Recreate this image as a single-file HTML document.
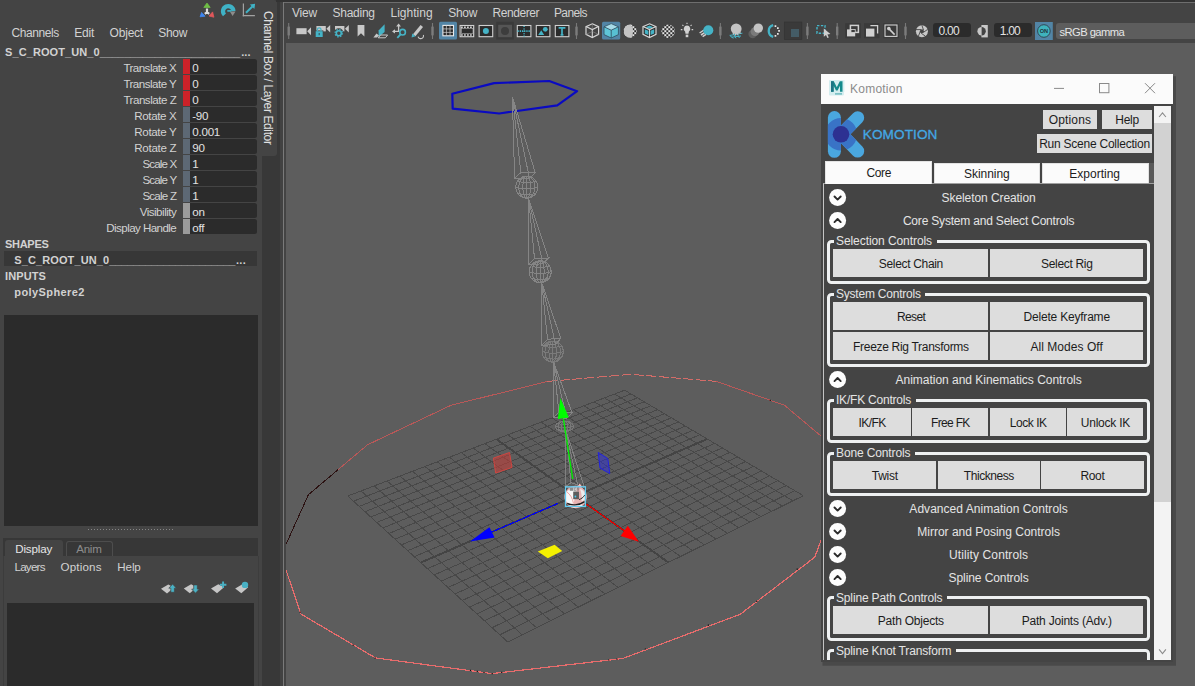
<!DOCTYPE html>
<html lang="en"><head><meta charset="utf-8"><title>Maya - Komotion</title>
<style>
html,body{margin:0;padding:0;}
body{width:1195px;height:686px;overflow:hidden;background:#444444;position:relative;
 font-family:"Liberation Sans",sans-serif;color:#cfcfcf;}
.b{position:absolute;box-sizing:border-box;}
.t{position:absolute;white-space:pre;display:block;margin:0;padding:0;}
svg{position:absolute;overflow:visible;}
button{font-family:"Liberation Sans",sans-serif;margin:0;padding:0;border:0;}

#kwin{position:absolute;left:821px;top:74px;width:352px;height:587.7px;background:#444444;box-shadow:2.25px 3px 0 0.75px #494949;}
#kwin .title{position:absolute;left:0;top:0;width:352px;height:30px;background:#fbfbfb;}
.kbtn{position:absolute;box-sizing:border-box;background:#dddddd;color:#1c1c1c;font-size:12px;line-height:12px;text-align:center;white-space:pre;}
.ktab{position:absolute;box-sizing:border-box;background:#f8f8f8;color:#1c1c1c;}
.grp{position:absolute;box-sizing:border-box;border:3px solid #eef0f1;border-radius:4.5px;}
</style></head>
<body>
<div class="b" id="channelbox" style="left:0;top:0;width:262px;height:686px;background:#444444;">
<svg style="left:199px;top:2px" width="58" height="17" viewBox="199 2 58 17">
 <g><polygon points="207,3.1 210.2,7.4 203.8,7.4" fill="#6fbf45" stroke="#6fbf45" stroke-width="0.8" stroke-linejoin="round"/><polygon points="201.6,12.4 200.1,16.8 205,16.2" fill="#3f86f0" stroke="#3f86f0" stroke-width="0.8" stroke-linejoin="round"/><polygon points="212.6,11.9 209,16 213.9,17.2" fill="#e0575a" stroke="#e0575a" stroke-width="0.8" stroke-linejoin="round"/>
 <path d="M207 8.6V12.2M207 12.2L204.8 13.8M207 12.2L209.2 13.8" stroke="#dcdcdc" stroke-width="2.2" fill="none"/></g>
 <g><path d="M224.5 14.9A5.2 5.2 0 1 1 233.4 11.1" stroke="#3fb2c6" stroke-width="4.2" fill="none"/><polygon points="229.8,11.6 235.5,11.6 232.6,16.1" fill="#8c8c8c"/><path d="M227.3 10.9H231.2" stroke="#3fb2c6" stroke-width="1.7"/></g>
 <g><path d="M243.4 3.5V16.4M242.6 15.6H254.9" stroke="#a2a2a2" stroke-width="1.2" fill="none"/><path d="M246 12.8L252.4 6.5" stroke="#3fb2c6" stroke-width="1.9"/><polygon points="255.1,3.8 254.4,9 249.9,4.5" fill="#3fb2c6"/></g>
</svg>
<span class="t" style="top:26.84px;font-size:12px;line-height:12px;left:11.6px;letter-spacing:-0.438px;color:#d2d2d2;">Channels</span>
<span class="t" style="top:26.84px;font-size:12px;line-height:12px;left:74.3px;letter-spacing:-0.245px;color:#d2d2d2;">Edit</span>
<span class="t" style="top:26.84px;font-size:12px;line-height:12px;left:109.6px;letter-spacing:-0.214px;color:#d2d2d2;">Object</span>
<span class="t" style="top:26.84px;font-size:12px;line-height:12px;left:158.3px;letter-spacing:-0.330px;color:#d2d2d2;">Show</span>
<span class="t" style="top:46.59px;font-size:11px;line-height:11px;left:5px;letter-spacing:0.097px;color:#d2d2d2;font-weight:bold;">S_C_ROOT_UN_0</span>
<span class="t" style="top:46.59px;font-size:11px;line-height:11px;left:99.8px;letter-spacing:-0.014px;color:#d2d2d2;font-weight:bold;">_______________________</span>
<span class="t" style="top:46.59px;font-size:11px;line-height:11px;left:241.2px;letter-spacing:0.111px;color:#d2d2d2;font-weight:bold;">...</span>
<div class="b" style="left:183px;top:59px;width:7px;height:14.6px;background:#cc2229;"></div>
<div class="b" style="left:190px;top:59px;width:67px;height:14.6px;background:#2b2b2b;border-radius:0 2.5px 2.5px 0;"></div>
<span class="t" style="top:61.98px;font-size:11.6px;line-height:11.6px;left:123.4px;letter-spacing:-0.544px;color:#d2d2d2;">Translate X</span>
<span class="t" style="top:61.98px;font-size:11.6px;line-height:11.6px;left:192.2px;color:#e2e2e2;">0</span>
<div class="b" style="left:183px;top:75px;width:7px;height:14.6px;background:#cc2229;"></div>
<div class="b" style="left:190px;top:75px;width:67px;height:14.6px;background:#2b2b2b;border-radius:0 2.5px 2.5px 0;"></div>
<span class="t" style="top:77.98px;font-size:11.6px;line-height:11.6px;left:123.4px;letter-spacing:-0.525px;color:#d2d2d2;">Translate Y</span>
<span class="t" style="top:77.98px;font-size:11.6px;line-height:11.6px;left:192.2px;color:#e2e2e2;">0</span>
<div class="b" style="left:183px;top:91px;width:7px;height:14.6px;background:#cc2229;"></div>
<div class="b" style="left:190px;top:91px;width:67px;height:14.6px;background:#2b2b2b;border-radius:0 2.5px 2.5px 0;"></div>
<span class="t" style="top:93.98px;font-size:11.6px;line-height:11.6px;left:123.4px;letter-spacing:-0.485px;color:#d2d2d2;">Translate Z</span>
<span class="t" style="top:93.98px;font-size:11.6px;line-height:11.6px;left:192.2px;color:#e2e2e2;">0</span>
<div class="b" style="left:183px;top:107px;width:7px;height:14.6px;background:#5d6874;"></div>
<div class="b" style="left:190px;top:107px;width:67px;height:14.6px;background:#2b2b2b;border-radius:0 2.5px 2.5px 0;"></div>
<span class="t" style="top:109.98px;font-size:11.6px;line-height:11.6px;left:134.3px;letter-spacing:-0.392px;color:#d2d2d2;">Rotate X</span>
<span class="t" style="top:109.98px;font-size:11.6px;line-height:11.6px;left:192.2px;letter-spacing:-0.212px;color:#e2e2e2;">-90</span>
<div class="b" style="left:183px;top:123px;width:7px;height:14.6px;background:#5d6874;"></div>
<div class="b" style="left:190px;top:123px;width:67px;height:14.6px;background:#2b2b2b;border-radius:0 2.5px 2.5px 0;"></div>
<span class="t" style="top:125.98px;font-size:11.6px;line-height:11.6px;left:134.3px;letter-spacing:-0.366px;color:#d2d2d2;">Rotate Y</span>
<span class="t" style="top:125.98px;font-size:11.6px;line-height:11.6px;left:192.2px;letter-spacing:-0.220px;color:#e2e2e2;">0.001</span>
<div class="b" style="left:183px;top:139px;width:7px;height:14.6px;background:#5d6874;"></div>
<div class="b" style="left:190px;top:139px;width:67px;height:14.6px;background:#2b2b2b;border-radius:0 2.5px 2.5px 0;"></div>
<span class="t" style="top:141.98px;font-size:11.6px;line-height:11.6px;left:134.3px;letter-spacing:-0.311px;color:#d2d2d2;">Rotate Z</span>
<span class="t" style="top:141.98px;font-size:11.6px;line-height:11.6px;left:192.2px;letter-spacing:-0.245px;color:#e2e2e2;">90</span>
<div class="b" style="left:183px;top:155px;width:7px;height:14.6px;background:#5d6874;"></div>
<div class="b" style="left:190px;top:155px;width:67px;height:14.6px;background:#2b2b2b;border-radius:0 2.5px 2.5px 0;"></div>
<span class="t" style="top:157.98px;font-size:11.6px;line-height:11.6px;left:142.4px;letter-spacing:-0.868px;color:#d2d2d2;">Scale X</span>
<span class="t" style="top:157.98px;font-size:11.6px;line-height:11.6px;left:192.2px;color:#e2e2e2;">1</span>
<div class="b" style="left:183px;top:171px;width:7px;height:14.6px;background:#5d6874;"></div>
<div class="b" style="left:190px;top:171px;width:67px;height:14.6px;background:#2b2b2b;border-radius:0 2.5px 2.5px 0;"></div>
<span class="t" style="top:173.98px;font-size:11.6px;line-height:11.6px;left:142.4px;letter-spacing:-0.838px;color:#d2d2d2;">Scale Y</span>
<span class="t" style="top:173.98px;font-size:11.6px;line-height:11.6px;left:192.2px;color:#e2e2e2;">1</span>
<div class="b" style="left:183px;top:187px;width:7px;height:14.6px;background:#5d6874;"></div>
<div class="b" style="left:190px;top:187px;width:67px;height:14.6px;background:#2b2b2b;border-radius:0 2.5px 2.5px 0;"></div>
<span class="t" style="top:189.98px;font-size:11.6px;line-height:11.6px;left:142.4px;letter-spacing:-0.775px;color:#d2d2d2;">Scale Z</span>
<span class="t" style="top:189.98px;font-size:11.6px;line-height:11.6px;left:192.2px;color:#e2e2e2;">1</span>
<div class="b" style="left:183px;top:203px;width:7px;height:14.6px;background:#9b9b9b;"></div>
<div class="b" style="left:190px;top:203px;width:67px;height:14.6px;background:#2b2b2b;border-radius:0 2.5px 2.5px 0;"></div>
<span class="t" style="top:205.98px;font-size:11.6px;line-height:11.6px;left:139.7px;letter-spacing:-0.509px;color:#d2d2d2;">Visibility</span>
<span class="t" style="top:205.98px;font-size:11.6px;line-height:11.6px;left:192.2px;letter-spacing:-0.245px;color:#e2e2e2;">on</span>
<div class="b" style="left:183px;top:219px;width:7px;height:14.6px;background:#9b9b9b;"></div>
<div class="b" style="left:190px;top:219px;width:67px;height:14.6px;background:#2b2b2b;border-radius:0 2.5px 2.5px 0;"></div>
<span class="t" style="top:221.98px;font-size:11.6px;line-height:11.6px;left:106.3px;letter-spacing:-0.573px;color:#d2d2d2;">Display Handle</span>
<span class="t" style="top:221.98px;font-size:11.6px;line-height:11.6px;left:192.2px;letter-spacing:-0.160px;color:#e2e2e2;">off</span>
<span class="t" style="top:239.49px;font-size:11px;line-height:11px;left:5px;letter-spacing:-0.290px;color:#d2d2d2;font-weight:bold;">SHAPES</span>
<div class="b" style="left:4px;top:251px;width:253px;height:14.6px;background:#373737;"></div>
<span class="t" style="top:254.99px;font-size:11px;line-height:11px;left:14.3px;letter-spacing:0.105px;color:#d2d2d2;font-weight:bold;">S_C_ROOT_UN_0</span>
<span class="t" style="top:254.99px;font-size:11px;line-height:11px;left:109.2px;letter-spacing:-0.118px;color:#d2d2d2;font-weight:bold;">_____________________</span>
<span class="t" style="top:254.99px;font-size:11px;line-height:11px;left:236px;letter-spacing:0.277px;color:#d2d2d2;font-weight:bold;">...</span>
<span class="t" style="top:271.49px;font-size:11px;line-height:11px;left:5px;letter-spacing:0.110px;color:#d2d2d2;font-weight:bold;">INPUTS</span>
<span class="t" style="top:286.69px;font-size:11px;line-height:11px;left:14.3px;letter-spacing:0.407px;color:#d2d2d2;font-weight:bold;">polySphere2</span>
<div class="b" style="left:4px;top:315px;width:254px;height:210.6px;background:#2b2b2b;"></div>
<div class="b" style="left:88px;top:529px;width:85.5px;height:1px;background-image:linear-gradient(90deg,#858585 1px,rgba(0,0,0,0) 1px);background-size:3px 1px;"></div>
<div class="b" style="left:3px;top:538px;width:255.4px;height:18px;background:#373737;"></div>
<div class="b" style="left:5px;top:540px;width:58px;height:16.5px;background:#444444;border-radius:3px 3px 0 0;"></div>
<div class="b" style="left:65.5px;top:540.5px;width:47.1px;height:15.5px;background:#373737;border:1px solid #4d4d4d;border-bottom:0;border-radius:3px 3px 0 0;"></div>
<span class="t" style="top:543.48px;font-size:11.6px;line-height:11.6px;left:15.2px;letter-spacing:-0.148px;color:#e6e6e6;">Display</span>
<span class="t" style="top:543.48px;font-size:11.6px;line-height:11.6px;left:76.2px;letter-spacing:-0.257px;color:#8c8c8c;">Anim</span>
<span class="t" style="top:561.38px;font-size:11.6px;line-height:11.6px;left:14.5px;letter-spacing:-0.770px;color:#d2d2d2;">Layers</span>
<span class="t" style="top:561.38px;font-size:11.6px;line-height:11.6px;left:60.5px;letter-spacing:0.175px;color:#d2d2d2;">Options</span>
<span class="t" style="top:561.38px;font-size:11.6px;line-height:11.6px;left:117.3px;letter-spacing:-0.114px;color:#d2d2d2;">Help</span>
<svg style="left:158px;top:580px" width="96" height="16" viewBox="158 580 96 16">
 <polygon points="161,588.8 168.3,584.4 174,587.4 167,593.4" fill="#c6c6c6"/><path d="M172.6 584.1L176.4 588.2H174.4V592.3H170.8V588.2H168.8Z" fill="#49b1c4" stroke="#444" stroke-width="0.7"/>
 <polygon points="183.8,588.6 191.1,584.2 196.8,587.2 189.8,593.2" fill="#c6c6c6"/><path d="M195.5 593.2L191.7 589.1H193.7V584.9H197.3V589.1H199.3Z" fill="#49b1c4" stroke="#444" stroke-width="0.7"/>
 <polygon points="211,588.6 218.3,584.2 224,587.2 217,593.3" fill="#c6c6c6"/><path d="M223.1 581.6V588M219.9 584.8H226.4" stroke="#49b1c4" stroke-width="1.9"/>
 <polygon points="235.2,588.6 242.4,584.2 248.2,587.2 241.3,593.3" fill="#c6c6c6"/><circle cx="245" cy="584.9" r="3.2" fill="#49b1c4"/>
</svg>
<div class="b" style="left:7px;top:603px;width:247px;height:83px;background:#2b2b2b;"></div>
</div>
<div class="b" style="left:258.3px;top:556px;width:1px;height:130px;background:#3d3d3d;"></div>
<div class="b" style="left:3.3px;top:556px;width:0.9px;height:130px;background:#3c3c3c;"></div>
<div class="b" style="left:262px;top:0px;width:18px;height:686px;background:#383838;"></div>
<div class="b" style="left:262px;top:0px;width:15.3px;height:155.5px;background:#444444;border-radius:0 3px 3px 0;"></div>
<span class="t" style="left:264.1px;top:11.3px;font-size:12px;line-height:12px;letter-spacing:-0.381px;color:#e0e0e0;transform-origin:0 0;transform:translate(10.2px,0) rotate(90deg);">Channel Box / Layer Editor</span>
<div class="b" style="left:279.8px;top:0px;width:3.2px;height:686px;background:#424242;"></div>
<div class="b" id="viewport-panel" style="left:283px;top:0;width:912px;height:686px;background:#444444;">
</div>
<div class="b" style="left:276px;top:0px;width:919px;height:2px;background:#333333;"></div>
<div class="b" style="left:283px;top:2px;width:912px;height:1px;background:#6e6e6e;"></div>
<div class="b" style="left:282.7px;top:2px;width:1.4px;height:684px;background:#7a7a7a;"></div>
<span class="t" style="top:7.04px;font-size:12px;line-height:12px;left:292px;letter-spacing:-0.224px;color:#d2d2d2;">View</span>
<span class="t" style="top:7.04px;font-size:12px;line-height:12px;left:332.6px;letter-spacing:-0.277px;color:#d2d2d2;">Shading</span>
<span class="t" style="top:7.04px;font-size:12px;line-height:12px;left:390.5px;letter-spacing:0.008px;color:#d2d2d2;">Lighting</span>
<span class="t" style="top:7.04px;font-size:12px;line-height:12px;left:448.2px;letter-spacing:-0.255px;color:#d2d2d2;">Show</span>
<span class="t" style="top:7.04px;font-size:12px;line-height:12px;left:492.5px;letter-spacing:-0.441px;color:#d2d2d2;">Renderer</span>
<span class="t" style="top:7.04px;font-size:12px;line-height:12px;left:554px;letter-spacing:-0.649px;color:#d2d2d2;">Panels</span>
<svg id="vp-toolbar" style="left:283px;top:19px" width="912" height="24" viewBox="283 19 912 24">
<path d="M288.7 23V39" stroke="#787878" stroke-width="1.1"/><path d="M288.7 26.6V35.4" stroke="#7c7c7c" stroke-width="2.4"/>
<path d="M432.5 23V39" stroke="#787878" stroke-width="1.1"/><path d="M432.5 26.6V35.4" stroke="#7c7c7c" stroke-width="2.4"/>
<path d="M576.5 23V39" stroke="#787878" stroke-width="1.1"/><path d="M576.5 26.6V35.4" stroke="#7c7c7c" stroke-width="2.4"/>
<path d="M720.4 23V39" stroke="#787878" stroke-width="1.1"/><path d="M720.4 26.6V35.4" stroke="#7c7c7c" stroke-width="2.4"/>
<path d="M807.4 23V39" stroke="#787878" stroke-width="1.1"/><path d="M807.4 26.6V35.4" stroke="#7c7c7c" stroke-width="2.4"/>
<path d="M837.2 23V39" stroke="#787878" stroke-width="1.1"/><path d="M837.2 26.6V35.4" stroke="#7c7c7c" stroke-width="2.4"/>
<path d="M905.5 23V39" stroke="#787878" stroke-width="1.1"/><path d="M905.5 26.6V35.4" stroke="#7c7c7c" stroke-width="2.4"/>
<rect x="296.4" y="28.2" width="10.2" height="6" fill="#c8c8c8"/><polygon points="307.2,31.2 311,27.2 311,35.2" fill="#c8c8c8"/>
<rect x="316.4" y="26" width="9.4" height="5.4" fill="#c8c8c8"/><polygon points="326.4,28.7 330.2,25 330.2,32.4" fill="#c8c8c8"/>
<rect x="315" y="30.4" width="8.4" height="7.4" fill="#444"/><rect x="315.7" y="31.2" width="7" height="5.8" fill="#45b3c6"/><path d="M317.4 31.2V29.6A1.8 1.8 0 0 1 321 29.6V31.2" stroke="#45b3c6" stroke-width="1.3" fill="none"/><rect x="318.6" y="33" width="1.2" height="2.2" fill="#2f5c66"/>
<rect x="335" y="26" width="9.4" height="5.4" fill="#c8c8c8"/><polygon points="345,28.7 348.8,25 348.8,32.4" fill="#c8c8c8"/>
<circle cx="338.8" cy="33.2" r="4.9" fill="#444"/><circle cx="338.8" cy="33.2" r="2.5" fill="none" stroke="#45b3c6" stroke-width="1.6"/><circle cx="338.8" cy="33.2" r="3.7" fill="none" stroke="#45b3c6" stroke-width="1.3" stroke-dasharray="1.45 1.456"/>
<polygon points="357.6,24.9 364.4,24.9 364.4,36.4 361,33.2 357.6,36.4" fill="#c8c8c8"/>
<polygon points="378.6,30.5 384.6,24.2 384.6,32 378.6,37" fill="#45b3c6"/><polygon points="376.5,33.5 373.4,37.6 377,37.6 379,35.5" fill="#c8c8c8"/><polygon points="380.5,35 387.6,35 385.4,37.8 378.2,37.8" fill="none" stroke="#c8c8c8" stroke-width="1"/>
<path d="M398.6 25.2V31.4H393.4" stroke="#c8c8c8" stroke-width="1.3" fill="none"/><polygon points="398.6,23.4 401,26.6 396.2,26.6" fill="#c8c8c8"/><polygon points="392,31.4 395,29.2 395,33.6" fill="#c8c8c8"/>
<circle cx="402.6" cy="32.2" r="2.8" fill="none" stroke="#45b3c6" stroke-width="1.6"/><path d="M400.6 34.4L397.3 37.8" stroke="#45b3c6" stroke-width="1.8"/>
<path d="M414.2 35.2L421.8 26" stroke="#c8c8c8" stroke-width="3.2"/><polygon points="411.6,37.6 412.2,33.6 415.6,36.2" fill="#45b3c6"/><path d="M418 36.6A2.6 2.6 0 0 0 423.4 35" stroke="#c8c8c8" stroke-width="1.1" fill="none"/>
<rect x="439" y="21.8" width="18" height="17.8" rx="1.5" fill="#5285a6"/>
<rect x="442.9" y="25.4" width="10.6" height="10.4" fill="#2b2b2b" stroke="#ececec" stroke-width="1.1"/><path d="M446.4 25.4V35.8M450 25.4V35.8M442.9 28.9H453.5M442.9 32.4H453.5" stroke="#d0d0d0" stroke-width="0.7"/>
<rect x="460.1" y="25.5" width="13.6" height="11.2" fill="#2b2b2b" stroke="#cfcfcf" stroke-width="1.1"/><path d="M461 27.3H473.5M461 35H473.5" stroke="#cfcfcf" stroke-width="1.6" stroke-dasharray="1.8 1.2"/><rect x="461.4" y="28.6" width="11.6" height="5" fill="#2b2b2b" stroke="#cfcfcf" stroke-width="0.5"/>
<rect x="479.1" y="25.5" width="13.6" height="11.2" fill="#2b2b2b" stroke="#cfcfcf" stroke-width="1.1"/><circle cx="485.9" cy="31.1" r="3" fill="#45b3c6"/>
<rect x="496.3" y="21.8" width="17.5" height="17.8" fill="#3a3a3a"/><rect x="498.2" y="24.8" width="13.8" height="12.4" fill="#555555"/><circle cx="505" cy="31" r="4" fill="#3d3d3d"/>
<rect x="517.3" y="25.5" width="13.6" height="11.2" fill="#2b2b2b" stroke="#cfcfcf" stroke-width="1.1"/><path d="M517.5 31.1H530.8" stroke="#45b3c6" stroke-width="1.8" stroke-dasharray="1.3 0.9"/><path d="M524.1 26H524.1M524.1 26V36.4" stroke="#45b3c6" stroke-width="1.6" stroke-dasharray="1 1.4"/>
<rect x="536.3" y="25.5" width="13.6" height="11.2" fill="#2b2b2b" stroke="#cfcfcf" stroke-width="1.1"/><circle cx="545.3" cy="29.3" r="2.4" fill="#45b3c6"/><polygon points="538.2,35 541.2,30.2 544.2,35" fill="#45b3c6"/>
<rect x="555.3" y="25.5" width="13.6" height="11.2" fill="#2b2b2b" stroke="#cfcfcf" stroke-width="1.1"/><path d="M558.6 27.8H565.4M562 27.8V34.8M560.6 34.9H563.4" stroke="#45b3c6" stroke-width="1.7" fill="none"/>
<path d="M592.3 23.8L598.6 26.6V34.4L592.3 37.6L586 34.4V26.6Z" fill="none" stroke="#d6d6d6" stroke-width="1.2"/><path d="M586 26.6L592.3 29.6L598.6 26.6M592.3 29.6V37.6" fill="none" stroke="#d6d6d6" stroke-width="1.1"/><path d="M592.3 23.8V29M586 34.4L592.3 31.5L598.6 34.4" stroke="#8a8a8a" stroke-width="0.6" fill="none"/>
<rect x="602" y="21.8" width="18.2" height="17.8" rx="1.5" fill="#5285a6"/>
<polygon points="611.2,23.6 618.4,26.8 611.2,30.2 604,26.8" fill="#a7dbe8"/><polygon points="604,26.8 611.2,30.2 611.2,38 604,34.6" fill="#5fc6d8"/><polygon points="618.4,26.8 611.2,30.2 611.2,38 618.4,34.6" fill="#58c0d2"/><path d="M611.2 23.6L618.4 26.8V34.6L611.2 38L604 34.6V26.8Z M604 26.8L611.2 30.2L618.4 26.8M611.2 30.2V38" stroke="#2f4c5e" stroke-width="0.8" fill="none"/>
<defs><pattern id="chk" width="4" height="4" patternUnits="userSpaceOnUse" x="0.3" y="0.2"><rect width="4" height="4" fill="#e4e4e4"/><rect width="2" height="2" fill="#2b2b2b"/><rect x="2" y="2" width="2" height="2" fill="#2b2b2b"/></pattern></defs>
<circle cx="630.3" cy="31.2" r="6.6" fill="url(#chk)"/><path d="M630.6 24.6A6.6 6.6 0 0 0 630.6 37.8A10 10 0 0 0 630.6 24.6Z" fill="#c4c4c4"/><circle cx="630.3" cy="31.2" r="6.6" fill="#c4c4c4" clip-path="inset(0 50% 0 0)"/>
<path d="M649.5 23.8L656 26.6V34.4L649.5 37.6L643 34.4V26.6Z" fill="#2b2b2b" stroke="#d6d6d6" stroke-width="1.2"/><polygon points="649.5,25.6 653.4,27.2 649.5,28.8 645.6,27.2" fill="#45b3c6"/><polygon points="644.8,29.2 648.4,30.8 648.4,35 644.8,33.4" fill="#45b3c6"/><polygon points="654.2,29.2 650.6,30.8 650.6,35 654.2,33.4" fill="#45b3c6"/><path d="M643 26.6L649.5 29.6L656 26.6M649.5 29.6V37.6" fill="none" stroke="#d6d6d6" stroke-width="1.1"/>
<circle cx="668.2" cy="31.2" r="6.7" fill="url(#chk)"/>
<path d="M687 25.6A3.3 3.3 0 0 1 688.9 31.6L688.5 33.8H685.5L685.1 31.6A3.3 3.3 0 0 1 687 25.6Z" fill="#d2d2d2"/><rect x="685.7" y="34.6" width="2.6" height="2.6" fill="#d2d2d2"/><path d="M687 22.8V24M682.4 24.8L683.4 25.8M691.6 24.8L690.6 25.8M680.8 29.6H682.4M693.2 29.6H691.6" stroke="#d2d2d2" stroke-width="1.1"/>
<path d="M699.6 33L704 30M701 35L705 32.4M702.6 36.6L706 34.4" stroke="#d2d2d2" stroke-width="1.5"/><circle cx="708.3" cy="30.2" r="5" fill="#45b3c6"/>
<path d="M730 35.4L742.4 33.2M731.6 37.2L741 36M733 33L736 38.4M736.6 32.6L739.4 38M729.6 35.4L733.4 38.4" stroke="#45b3c6" stroke-width="1"/><circle cx="736.2" cy="28.8" r="5.4" fill="#c4c4c4"/><path d="M733.4 32V34.4M735.6 32.8V35.4M737.8 32.8V35M740 31.6V33.8" stroke="#c4c4c4" stroke-width="1.2"/>
<circle cx="752.6" cy="34" r="4.2" fill="#5e5e5e"/><circle cx="755" cy="31.6" r="4.4" fill="#7a7a7a"/><circle cx="758.3" cy="28.1" r="4.7" fill="#c4c4c4"/>
<path d="M773.2 25.2A6 6 0 0 0 773.2 36.8" stroke="#45b3c6" stroke-width="2.3" fill="none"/><path d="M774.6 25.2h1.7v1.7h-1.7zM777 27.2h1.7v1.7h-1.7zM778.2 30.1h1.7v1.7h-1.7zM777 33h1.7v1.7h-1.7zM774.6 35.1h1.7v1.7h-1.7z" fill="#e6e6e6"/>
<rect x="784.3" y="22" width="17.6" height="17.6" fill="#3a3a3a" stroke="#333" stroke-width="0.6"/><rect x="791" y="29" width="8" height="8" fill="#445c66"/>
<rect x="817" y="25.6" width="8" height="7.6" fill="none" stroke="#45b3c6" stroke-width="1.4" stroke-dasharray="2.4 1.5"/><polygon points="823.8,28.6 830.4,34 827.4,34.4 828.8,37.4 827.4,38 826,35 823.8,36.8" fill="#cfcfcf"/>
<rect x="845.2" y="23.2" width="15.6" height="15" fill="#3a3a3a"/>
<rect x="864" y="23.2" width="15.6" height="15" fill="#3a3a3a"/>
<rect x="883.3" y="23.2" width="15.6" height="15" fill="#3a3a3a"/>
<rect x="850.4" y="25.4" width="8" height="7" fill="none" stroke="#d0d0d0" stroke-width="1.5"/><rect x="847" y="29.4" width="8.2" height="7" fill="#d0d0d0"/><rect x="851" y="29.4" width="4.2" height="3" fill="#3a3a3a" stroke="#d0d0d0" stroke-width="0.8"/>
<path d="M870.4 25.6H877.6V33.4" fill="none" stroke="#d0d0d0" stroke-width="1.3"/><rect x="866" y="28.6" width="8.4" height="8" fill="#d0d0d0"/>
<rect x="885" y="25" width="12" height="11.4" fill="#3a3a3a" stroke="#d0d0d0" stroke-width="1.1"/><path d="M888.6 28.4L894.6 34.6" stroke="#d0d0d0" stroke-width="1.6"/><circle cx="888.8" cy="28.6" r="1.8" fill="#d0d0d0"/>
<circle cx="921.9" cy="31.3" r="6" fill="#c8c8c8"/><circle cx="921.9" cy="31.3" r="2" fill="#444"/><path d="M921.9 25.3L923.5 30M927.6 29.4L923.4 32.4M925.4 36.2L921.2 33.2M918.4 36.2L920.2 31.6M916 29.6L921 29.6" stroke="#444" stroke-width="0.9"/>
<rect x="981.4" y="25" width="6.4" height="12.4" fill="#c8c8c8"/><circle cx="981.6" cy="31.2" r="4.2" fill="#c8c8c8"/><path d="M981.6 27A4.2 4.2 0 0 1 981.6 35.4Z" fill="#444"/>
<rect x="1035" y="22" width="17.8" height="18" fill="#5285a6"/><circle cx="1043.9" cy="31" r="6.3" fill="#3fb3bd" stroke="#2d3e48" stroke-width="0.9"/>
<text x="1043.9" y="33.1" text-anchor="middle" font-family="Liberation Sans, sans-serif" font-weight="bold" font-size="5.6" fill="#22343c">ON</text>
</svg>
<div class="b" style="left:933px;top:23.4px;width:38.2px;height:14px;background:#2b2b2b;border-radius:3px;"></div>
<span class="t" style="top:24.54px;font-size:12px;line-height:12px;left:938.6px;letter-spacing:-0.739px;color:#e2e2e2;">0.00</span>
<div class="b" style="left:994.2px;top:23.4px;width:37.6px;height:14px;background:#2b2b2b;border-radius:3px;"></div>
<span class="t" style="top:24.54px;font-size:12px;line-height:12px;left:999.8px;letter-spacing:-0.839px;color:#e2e2e2;">1.00</span>
<div class="b" style="left:1056px;top:22.5px;width:141px;height:16.7px;background:#5d5d5d;border-radius:3px;"></div>
<span class="t" style="top:26.92px;font-size:11.2px;line-height:11.2px;left:1059.4px;letter-spacing:-0.533px;color:#e6e6e6;">sRGB gamma</span>
<div class="b" style="left:286px;top:43px;width:909px;height:643px;background:#5d5d5d;"></div>
<svg id="scene" style="left:286px;top:43px" width="909" height="643" viewBox="286 43 909 643">
<defs><clipPath id="vpclip"><rect x="286" y="43" width="909" height="643"/></clipPath></defs><g clip-path="url(#vpclip)">
<path d="M624.6 390.2L347.8 496.0M624.6 390.2L803.3 495.7M631.0 394.0L353.4 501.2M614.6 394.0L792.9 500.8M637.6 397.8L359.1 506.4M604.5 397.9L782.4 506.1M644.2 401.7L364.9 511.7M594.3 401.8L771.7 511.4M650.9 405.7L370.8 517.0M583.9 405.7L760.8 516.7M657.6 409.7L376.7 522.4M573.4 409.7L749.8 522.2M664.5 413.7L382.7 528.0M562.8 413.8L738.7 527.7M671.4 417.8L388.8 533.5M552.1 417.9L727.4 533.3M678.4 421.9L395.0 539.2M541.2 422.1L715.9 539.0M685.5 426.1L401.3 544.9M530.2 426.3L704.3 544.7M692.7 430.4L407.7 550.7M519.1 430.5L692.5 550.5M700.0 434.7L414.2 556.7M507.9 434.8L680.5 556.5M714.8 443.4L427.4 568.7M484.9 443.6L656.1 568.6M722.3 447.9L434.2 574.9M473.2 448.1L643.6 574.7M729.9 452.4L441.0 581.2M461.4 452.6L630.9 581.0M737.7 456.9L448.0 587.5M449.4 457.2L618.0 587.4M745.5 461.6L455.0 594.0M437.3 461.8L604.9 593.9M753.5 466.3L462.2 600.5M425.0 466.5L591.7 600.4M761.5 471.0L469.5 607.2M412.5 471.3L578.2 607.1M769.6 475.8L476.9 613.9M399.9 476.1L564.5 613.8M777.9 480.7L484.4 620.8M387.1 481.0L550.6 620.7M786.3 485.6L492.0 627.7M374.2 485.9L536.5 627.7M794.7 490.6L499.8 634.8M361.1 491.0L522.2 634.8M803.3 495.7L507.7 642.0M347.8 496.0L507.7 642.0" stroke="#484848" stroke-width="1" fill="none" shape-rendering="crispEdges"/>
<path d="M707.3 439.0L420.7 562.6M496.5 439.2L668.4 562.5" stroke="#444444" stroke-width="2" fill="none" shape-rendering="crispEdges"/>
<path d="M281 555.4L308.4 494.7L338 469.7" stroke="#2c1212" stroke-width="1" fill="none" shape-rendering="crispEdges"/>
<path d="M338 469.7L367.5 444.8L450.7 405.4L547.4 381.4" stroke="#b85858" stroke-width="1" fill="none" shape-rendering="crispEdges"/>
<path d="M547.4 381.4L630.9 374.3L716.4 381.4" stroke="#d46c68" stroke-width="1" fill="none" stroke-dasharray="10 2.4" shape-rendering="crispEdges"/>
<path d="M716.4 381.4L784.4 405.2L840 452" stroke="#b85858" stroke-width="1" fill="none" shape-rendering="crispEdges"/>
<path d="M832 510L814.8 557.2L740.2 614.3L622.8 658.5L492 673.6L375.4 657.9L301 614.1L281 555.4" stroke="#e86c6c" stroke-width="1.2" fill="none" stroke-linejoin="round" shape-rendering="crispEdges"/>
<path d="M299.6 611.6h1.2v1.2h-1.2zM352.7 644.6h1.2v1.2h-1.2zM374.6 657.6h1.2v1.2h-1.2zM469.9 669.7h1.2v1.2h-1.2zM476.7 670.8h1.2v1.2h-1.2zM483.4 671.9h1.2v1.2h-1.2zM491.6 673.0h1.2v1.2h-1.2zM501.1 671.8h1.2v1.2h-1.2zM608.2 659.4h1.2v1.2h-1.2zM616.4 658.6h1.2v1.2h-1.2zM644.8 648.4h1.2v1.2h-1.2zM769.6 399.8h1.2v1.2h-1.2zM796.6 568.5h1.2v1.2h-1.2zM756.2 600.8h1.2v1.2h-1.2zM707.8 624.6h1.2v1.2h-1.2z" fill="#151010"/>
<polygon points="452.3,93.7 494.1,83.1 549.2,81 577.1,91.2 557.3,105.3 499.2,113.5 452.7,108.6" fill="none" stroke="#0a0ac2" stroke-width="2.2" stroke-linejoin="round"/>
<path d="M514.6 178.4L520.8 172.6L535.3 172.9L529.5 178.4ZM512.4 96.7L514.6 178.4M512.4 96.7L520.8 172.6M512.4 96.7L535.3 172.9M512.4 96.7L529.5 178.4" stroke="#858585" stroke-width="1" fill="none" opacity="1.0" shape-rendering="crispEdges"/>
<g stroke="#858585" stroke-width="1" fill="none" opacity="1.0" shape-rendering="crispEdges"><ellipse cx="526.8" cy="187.2" rx="11" ry="11"/><ellipse cx="526.8" cy="187.2" rx="4.0" ry="11"/><ellipse cx="526.8" cy="187.2" rx="8.1" ry="11"/><path d="M517.6 181.1Q526.8 184.7 536.0 181.1"/><path d="M515.8 187.2Q526.8 190.7 537.8 187.2"/><path d="M517.6 193.2Q526.8 196.8 536.0 193.2"/><path d="M526.8 176.2V198.2"/></g>
<path d="M528.6 264.5L534.5 258.4L548.4 258.0L542.9 263.8ZM528.6 198.6L528.6 264.5M528.6 198.6L534.5 258.4M528.6 198.6L548.4 258.0M528.6 198.6L542.9 263.8" stroke="#858585" stroke-width="1" fill="none" opacity="1.0" shape-rendering="crispEdges"/>
<g stroke="#858585" stroke-width="1" fill="none" opacity="1.0" shape-rendering="crispEdges"><ellipse cx="540.2" cy="271.8" rx="11" ry="11"/><ellipse cx="540.2" cy="271.8" rx="4.0" ry="11"/><ellipse cx="540.2" cy="271.8" rx="8.1" ry="11"/><path d="M531.0 265.8Q540.2 269.3 549.4 265.8"/><path d="M529.2 271.8Q540.2 275.3 551.2 271.8"/><path d="M531.0 277.9Q540.2 281.4 549.4 277.9"/><path d="M540.2 260.8V282.8"/></g>
<path d="M541.8 345.5L547.5 339.2L560.8 338.4L555.5 344.4ZM541.8 283.0L541.8 345.5M541.8 283.0L547.5 339.2M541.8 283.0L560.8 338.4M541.8 283.0L555.5 344.4" stroke="#858585" stroke-width="1" fill="none" opacity="1.0" shape-rendering="crispEdges"/>
<g stroke="#858585" stroke-width="1" fill="none" opacity="0.75" shape-rendering="crispEdges"><ellipse cx="552.7" cy="351.6" rx="10.6" ry="10.6"/><ellipse cx="552.7" cy="351.6" rx="3.8" ry="10.6"/><ellipse cx="552.7" cy="351.6" rx="7.8" ry="10.6"/><path d="M543.8 345.8Q552.7 349.2 561.6 345.8"/><path d="M542.1 351.6Q552.7 355.0 563.3 351.6"/><path d="M543.8 357.4Q552.7 360.8 561.6 357.4"/><path d="M552.7 341.0V362.20000000000005"/></g>
<path d="M553.3 417.8L558.9 412.1L572.0 412.7L566.8 418.1ZM553.5 361.8L553.3 417.8M553.5 361.8L558.9 412.1M553.5 361.8L572.0 412.7M553.5 361.8L566.8 418.1" stroke="#858585" stroke-width="1" fill="none" opacity="1.0" shape-rendering="crispEdges"/>
<g stroke="#858585" stroke-width="1" fill="none" opacity="0.7" shape-rendering="crispEdges"><ellipse cx="564.5" cy="426.5" rx="9" ry="5.5"/><ellipse cx="564.5" cy="426.5" rx="3.2" ry="5.5"/><ellipse cx="564.5" cy="426.5" rx="6.7" ry="5.5"/><path d="M557.0 423.5Q564.5 425.2 572.0 423.5"/><path d="M555.5 426.5Q564.5 428.3 573.5 426.5"/><path d="M557.0 429.5Q564.5 431.3 572.0 429.5"/><path d="M564.5 421.0V432.0"/></g>
<path d="M565.3 487.0L571.0 482.8L584.3 487.0L579.0 491.0ZM566.0 431.0L565.3 487.0M566.0 431.0L571.0 482.8M566.0 431.0L584.3 487.0M566.0 431.0L579.0 491.0" stroke="#858585" stroke-width="1" fill="none" opacity="0.9" shape-rendering="crispEdges"/>
<polygon points="493.4,458.1 509.5,452.5 512,467.5 495.7,473" fill="rgba(200,60,55,0.55)" stroke="#d8443e" stroke-width="0.9"/>
<polygon points="598.2,452.4 607.8,458.6 609.8,473.5 600,468.2" fill="rgba(40,40,230,0.45)" stroke="#2222e0" stroke-width="1"/>
<polygon points="537.8,551.5 554.6,544.8 562.2,551 547.8,558.3" fill="#f4f000"/>
<path d="M558 503.4L490 532.8" stroke="#0000f0" stroke-width="1.2" shape-rendering="crispEdges"/><polygon points="470,541.5 489.4,527.2 494.6,537.6" fill="#0000ff"/>
<path d="M586.6 504.2L626 532" stroke="#e00000" stroke-width="1.2" shape-rendering="crispEdges"/><polygon points="638.9,541.7 620.6,536 627.8,525.8" fill="#ff0000"/>
<path d="M572.7 479L563.4 418.8" stroke="#00ee00" stroke-width="1.35"/><polygon points="560.4,398 568.8,417.6 557.8,419" fill="#00ff00"/>
<g id="rootjoint"><circle cx="575.6" cy="497" r="11.2" fill="#f6bcbc" opacity="0.9"/><polygon points="579.6,483.4 582.6,487 577,487.4" fill="#f6bcbc"/><path d="M566 492.5C569 488.5 574 487.6 577 488.2L573.6 503.4C570 504.4 567 503 566 501Z" fill="#f7f7f7"/><path d="M580 489C584 490 586.4 494 586 499L581.6 501.4C582 497 581.6 492.6 580 489Z" fill="#ebebeb"/><rect x="569.8" y="487.4" width="3.6" height="3.4" fill="#8c8c8c"/><rect x="573.2" y="491.6" width="5.8" height="7.6" fill="#5e5e5e"/><circle cx="575.4" cy="496.5" r="0.9" fill="#45c8f0"/><path d="M574.4 487.8h1.6v3h-1.6zM577.4 487.6l1.6 0l-1 3.2z" fill="none" stroke="#666" stroke-width="0.6"/><path d="M566.8 492C570 494 572.4 498 573.4 503" stroke="#f09a9a" stroke-width="0.9" fill="none"/><path d="M567.2 503.4C571 505.8 579 505.6 584.6 501.6" stroke="#1e1e1e" stroke-width="1.3" fill="none"/><path d="M569.6 506C573 507 578 506.8 582 505.2" stroke="#fafafa" stroke-width="1.4" fill="none"/><path d="M579 499.6C581 499 583.4 497.4 584.8 495" stroke="#2a2a2a" stroke-width="1" fill="none"/><rect x="565.5" y="486.8" width="19.9" height="19.6" fill="none" stroke="#62cdf2" stroke-width="1.25"/></g>
</g></svg>
<div id="kwin"><div class="title"></div></div>
<svg style="left:828px;top:79px" width="18" height="18" viewBox="828 79 18 18">
<rect x="829" y="80" width="14.9" height="15.6" rx="1" fill="#d3edef"/><path d="M839.5 80H844.6V92H843.9V80.6H839.5Z" fill="#e4f4f5"/>
<path d="M831 91.7V81.3H833.8L836.8 87.2L839.8 81.3H842.5V91.7H840V85.8L837.6 90.4H836L833.6 85.8V91.7Z" fill="#14898b"/><path d="M831 91.7V81.3H833.6V91.7Z" fill="#1b7484"/><path d="M835 93.9H842" stroke="#5fb2b8" stroke-width="1.3"/></svg>
<span class="t" style="top:82.74px;font-size:12px;line-height:12px;left:850px;letter-spacing:0.238px;color:#8b8b8b;">Komotion</span>
<svg style="left:1050px;top:80px" width="110" height="18" viewBox="1050 80 110 18">
<path d="M1054 88.4H1064" stroke="#8a8a8a" stroke-width="1"/><rect x="1099.5" y="83.5" width="9.4" height="9.2" fill="none" stroke="#8a8a8a" stroke-width="1"/>
<path d="M1145 83.2L1155 93.2M1155 83.2L1145 93.2" stroke="#888888" stroke-width="1"/></svg>
<svg id="klogo" style="left:826px;top:109px" width="114" height="52" viewBox="826 109 114 52">
<defs><mask id="km" maskUnits="userSpaceOnUse" x="826" y="109" width="42" height="52"><g stroke="#fff" stroke-width="13" stroke-linecap="round" fill="none"><path d="M834.4 117.5V151.3"/><path d="M841.4 134.3L857.7 117.7"/><path d="M841.4 134.3L857.7 151.1"/></g></mask></defs>
<g stroke="#4aa7df" stroke-width="13" stroke-linecap="round" fill="none"><path d="M834.4 117.5V151.3"/><path d="M841.4 134.3L857.7 117.7"/><path d="M841.4 134.3L857.7 151.1"/></g>
<circle cx="841" cy="134.3" r="16.2" fill="#3973c6" mask="url(#km)"/><circle cx="841" cy="134.3" r="8.3" fill="#2d3192"/>
<text x="862.8" y="139" font-family="Liberation Sans, sans-serif" font-size="13.6" fill="#43a8e4" textLength="74.6" lengthAdjust="spacing" stroke="#43a8e4" stroke-width="0.3">KOMOTION</text></svg>
<button class="kbtn" style="left:1043.3px;top:109.6px;width:53.3px;height:19.7px;padding-top:0.38px;letter-spacing:0.149px;padding-right:0.00px;">Options</button>
<button class="kbtn" style="left:1102.3px;top:109.6px;width:49.3px;height:19.7px;padding-top:0.38px;letter-spacing:-0.245px;padding-left:0.25px;">Help</button>
<button class="kbtn" style="left:1037.2px;top:133.7px;width:114.4px;height:19.6px;padding-top:0.28px;letter-spacing:-0.235px;padding-left:0.24px;">Run Scene Collection</button>
<div class="b ktab" style="left:934px;top:163.4px;width:106.4px;height:20px;background:#fbfbfb;border:1px solid #e2e2e2;border-bottom:0;"></div>
<div class="b ktab" style="left:1042px;top:163.4px;width:107px;height:20px;background:#fbfbfb;border:1px solid #e2e2e2;border-bottom:0;"></div>
<div class="b" style="left:1149px;top:163.4px;width:4.6px;height:20px;background:#595959;"></div>
<div class="b" style="left:823px;top:183.2px;width:330.8px;height:476.8px;border-left:1.3px solid #c4c4c4;border-top:1px solid #a0a0a0;"></div>
<div class="b ktab" style="left:825px;top:161px;width:107.4px;height:23.2px;background:#fbfbfb;border:1px solid #e4e4e4;border-bottom:0;"></div>
<span class="t" style="top:167.44px;font-size:12px;line-height:12px;left:866.4px;letter-spacing:-0.303px;color:#1c1c1c;">Core</span>
<span class="t" style="top:168.24px;font-size:12px;line-height:12px;left:964px;letter-spacing:-0.042px;color:#1c1c1c;">Skinning</span>
<span class="t" style="top:168.24px;font-size:12px;line-height:12px;left:1069.3px;letter-spacing:0.000px;color:#1c1c1c;">Exporting</span>
<div class="b" style="left:1153.8px;top:106px;width:17.4px;height:554px;background:#f3f3f3;"></div>
<div class="b" style="left:1153.8px;top:123px;width:17.4px;height:379px;background:#d2d2d2;"></div>
<svg style="left:1154px;top:106px" width="17" height="554" viewBox="1154 106 17 554"><path d="M1159.1 117L1162.5 112.8L1165.9 117" stroke="#8c8c8c" stroke-width="1.1" fill="none"/><path d="M1159.1 649.4L1162.5 653.6L1165.9 649.4" stroke="#8c8c8c" stroke-width="1.1" fill="none"/></svg>
<div class="b" id="kscroll" style="left:0;top:0;width:1153px;height:659.8px;overflow:hidden;pointer-events:none;">
<span class="t" style="top:191.64px;font-size:12px;line-height:12px;left:941.6px;letter-spacing:-0.082px;color:#e4e4e4;">Skeleton Creation</span>
<span class="t" style="top:214.64px;font-size:12px;line-height:12px;left:902.9px;letter-spacing:-0.194px;color:#e4e4e4;">Core System and Select Controls</span>
<span class="t" style="top:373.64px;font-size:12px;line-height:12px;left:895.5px;letter-spacing:-0.017px;color:#e4e4e4;">Animation and Kinematics Controls</span>
<span class="t" style="top:502.64px;font-size:12px;line-height:12px;left:909.35px;letter-spacing:0.040px;color:#e4e4e4;">Advanced Animation Controls</span>
<span class="t" style="top:525.64px;font-size:12px;line-height:12px;left:917.25px;letter-spacing:-0.001px;color:#e4e4e4;">Mirror and Posing Controls</span>
<span class="t" style="top:548.64px;font-size:12px;line-height:12px;left:949.1px;letter-spacing:0.103px;color:#e4e4e4;">Utility Controls</span>
<span class="t" style="top:571.64px;font-size:12px;line-height:12px;left:948.6px;letter-spacing:-0.092px;color:#e4e4e4;">Spline Controls</span>
<svg style="left:826px;top:186px" width="24" height="404" viewBox="826 186 24 404"><circle cx="837.6" cy="197.6" r="8.5" fill="#fdfdfd"/><path d="M834.5 196.5L837.6 199.6L840.7 196.5" stroke="#2a2a2a" stroke-width="1.9" fill="none" stroke-linecap="round" stroke-linejoin="round"/><circle cx="837.6" cy="220.6" r="8.5" fill="#fdfdfd"/><path d="M834.5 222.1L837.6 219L840.7 222.1" stroke="#2a2a2a" stroke-width="1.9" fill="none" stroke-linecap="round" stroke-linejoin="round"/><circle cx="837.6" cy="379.6" r="8.5" fill="#fdfdfd"/><path d="M834.5 381.1L837.6 378L840.7 381.1" stroke="#2a2a2a" stroke-width="1.9" fill="none" stroke-linecap="round" stroke-linejoin="round"/><circle cx="837.6" cy="508.6" r="8.5" fill="#fdfdfd"/><path d="M834.5 507.5L837.6 510.6L840.7 507.5" stroke="#2a2a2a" stroke-width="1.9" fill="none" stroke-linecap="round" stroke-linejoin="round"/><circle cx="837.6" cy="531.6" r="8.5" fill="#fdfdfd"/><path d="M834.5 530.5L837.6 533.6L840.7 530.5" stroke="#2a2a2a" stroke-width="1.9" fill="none" stroke-linecap="round" stroke-linejoin="round"/><circle cx="837.6" cy="554.6" r="8.5" fill="#fdfdfd"/><path d="M834.5 553.5L837.6 556.6L840.7 553.5" stroke="#2a2a2a" stroke-width="1.9" fill="none" stroke-linecap="round" stroke-linejoin="round"/><circle cx="837.6" cy="577.6" r="8.5" fill="#fdfdfd"/><path d="M834.5 579.1L837.6 576L840.7 579.1" stroke="#2a2a2a" stroke-width="1.9" fill="none" stroke-linecap="round" stroke-linejoin="round"/></svg>
<div class="grp" style="left:827.2px;top:239.7px;width:322.8px;height:44.2px;"></div>
<div class="b" style="left:834px;top:235.7px;width:102.6px;height:12px;background:#444444;"></div>
<span class="t" style="top:234.94px;font-size:12px;line-height:12px;left:836px;letter-spacing:-0.077px;color:#e4e4e4;">Selection Controls</span>
<button class="kbtn" style="left:833.2px;top:248.6px;width:155.1px;height:28.2px;padding-top:2.88px;letter-spacing:-0.328px;padding-left:0.33px;">Select Chain</button>
<button class="kbtn" style="left:989.8px;top:248.6px;width:153.7px;height:28.2px;padding-top:2.88px;letter-spacing:-0.309px;padding-left:0.31px;">Select Rig</button>
<div class="grp" style="left:827.2px;top:292.7px;width:322.8px;height:74.3px;"></div>
<div class="b" style="left:834px;top:288.7px;width:91.3px;height:12px;background:#444444;"></div>
<span class="t" style="top:287.94px;font-size:12px;line-height:12px;left:836px;letter-spacing:-0.222px;color:#e4e4e4;">System Controls</span>
<button class="kbtn" style="left:833.2px;top:301.6px;width:155.1px;height:28.6px;padding-top:2.88px;letter-spacing:-0.670px;padding-left:0.67px;">Reset</button>
<button class="kbtn" style="left:989.8px;top:301.6px;width:153.7px;height:28.6px;padding-top:2.88px;letter-spacing:-0.205px;padding-left:0.21px;">Delete Keyframe</button>
<button class="kbtn" style="left:833.2px;top:331.8px;width:155.1px;height:28.4px;padding-top:2.88px;letter-spacing:-0.302px;padding-left:0.30px;">Freeze Rig Transforms</button>
<button class="kbtn" style="left:989.8px;top:331.8px;width:153.7px;height:28.4px;padding-top:2.88px;letter-spacing:0.053px;padding-right:0.00px;">All Modes Off</button>
<div class="grp" style="left:827.2px;top:398.7px;width:322.8px;height:44.2px;"></div>
<div class="b" style="left:834px;top:394.7px;width:81.6px;height:12px;background:#444444;"></div>
<span class="t" style="top:393.94px;font-size:12px;line-height:12px;left:836px;letter-spacing:-0.216px;color:#e4e4e4;">IK/FK Controls</span>
<button class="kbtn" style="left:833.2px;top:407.8px;width:77.4px;height:28.2px;padding-top:2.88px;letter-spacing:-0.521px;padding-left:0.52px;">IK/FK</button>
<button class="kbtn" style="left:911.8px;top:407.8px;width:76.5px;height:28.2px;padding-top:2.88px;letter-spacing:-0.678px;padding-left:0.68px;">Free FK</button>
<button class="kbtn" style="left:989.8px;top:407.8px;width:76.4px;height:28.2px;padding-top:2.88px;letter-spacing:-0.431px;padding-left:0.43px;">Lock IK</button>
<button class="kbtn" style="left:1067.2px;top:407.8px;width:76.3px;height:28.2px;padding-top:2.88px;letter-spacing:-0.217px;padding-left:0.22px;">Unlock IK</button>
<div class="grp" style="left:827.2px;top:451.5px;width:322.8px;height:44.2px;"></div>
<div class="b" style="left:834px;top:447.5px;width:81px;height:12px;background:#444444;"></div>
<span class="t" style="top:446.74px;font-size:12px;line-height:12px;left:836px;letter-spacing:-0.127px;color:#e4e4e4;">Bone Controls</span>
<button class="kbtn" style="left:833.2px;top:460.6px;width:103px;height:28.2px;padding-top:2.88px;letter-spacing:-0.267px;padding-left:0.27px;">Twist</button>
<button class="kbtn" style="left:937.6px;top:460.6px;width:102px;height:28.2px;padding-top:2.88px;letter-spacing:-0.447px;padding-left:0.45px;">Thickness</button>
<button class="kbtn" style="left:1041px;top:460.6px;width:102.5px;height:28.2px;padding-top:2.88px;letter-spacing:-0.337px;padding-left:0.34px;">Root</button>
<div class="grp" style="left:827.2px;top:596.2px;width:322.8px;height:44.8px;"></div>
<div class="b" style="left:834px;top:592.2px;width:112.9px;height:12px;background:#444444;"></div>
<span class="t" style="top:592.14px;font-size:12px;line-height:12px;left:836px;letter-spacing:-0.155px;color:#e4e4e4;">Spline Path Controls</span>
<button class="kbtn" style="left:833.2px;top:605.7px;width:155.1px;height:28.4px;padding-top:2.88px;letter-spacing:-0.225px;padding-left:0.23px;">Path Objects</button>
<button class="kbtn" style="left:989.8px;top:605.7px;width:153.7px;height:28.4px;padding-top:2.88px;letter-spacing:-0.201px;padding-left:0.20px;">Path Joints (Adv.)</button>
<div class="grp" style="left:827.2px;top:649.2px;width:322.8px;height:50.8px;"></div>
<div class="b" style="left:834px;top:645.2px;width:122px;height:12px;background:#444444;"></div>
<span class="t" style="top:645.14px;font-size:12px;line-height:12px;left:836px;letter-spacing:-0.158px;color:#e4e4e4;">Spline Knot Transform</span>
</div>
</body></html>
